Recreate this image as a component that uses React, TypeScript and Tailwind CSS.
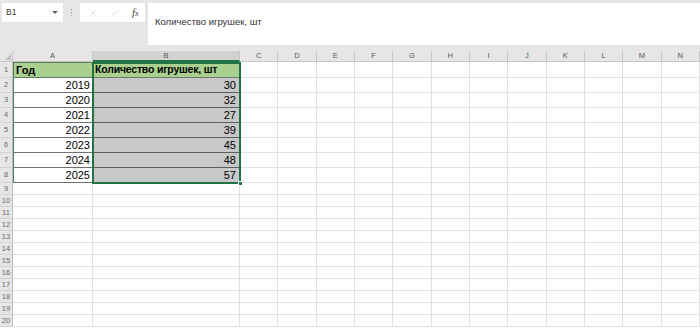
import React from 'react';
import { X, Check } from 'lucide-react';

const cols = ['C', 'D', 'E', 'F', 'G', 'H', 'I', 'J', 'K', 'L', 'M', 'N'];

const data: [string, string][] = [
  ['2019', '30'],
  ['2020', '32'],
  ['2021', '27'],
  ['2022', '39'],
  ['2023', '45'],
  ['2024', '48'],
  ['2025', '57'],
];

const rowHeights = [16, 15, 15, 15, 15, 15, 15, 15, 12, 12, 12, 12, 12, 12, 12, 12, 12, 12, 12, 12];

function FormulaBar() {
  return (
    <div className="flex h-[51px] items-start bg-[#e6e6e6] pt-[3px]">
      {/* Name box */}
      <div className="ml-[2px] flex h-[19px] w-[61px] items-center justify-between bg-white pl-[4px] pr-[5px]">
        <span className="text-[8.5px] text-[#333]">B1</span>
        <span className="h-0 w-0 border-x-[3px] border-t-[3px] border-x-transparent border-t-[#666]" />
      </div>
      <div className="flex h-[19px] w-[17px] flex-col items-center justify-center gap-[2px]">
        <span className="h-[1px] w-[1px] bg-[#999]" />
        <span className="h-[1px] w-[1px] bg-[#999]" />
        <span className="h-[1px] w-[1px] bg-[#999]" />
      </div>
      {/* cancel / enter / fx */}
      <div className="flex h-[19px] w-[65px] items-center gap-[12px] bg-white pl-[8px]">
        <X size={10} strokeWidth={1.2} className="text-[#bdbdbd]" />
        <Check size={10} strokeWidth={1.2} className="text-[#bdbdbd]" />
        <span className="font-['Liberation_Serif',serif] text-[11px] italic leading-none text-[#444]">
          f<span className="text-[8px]">x</span>
        </span>
      </div>
      {/* formula input */}
      <div className="ml-[3px] h-[42px] flex-1 bg-white pl-[7px] pt-[5px]">
        <span className="text-[9.5px] text-[#333]">Количество игрушек, шт</span>
      </div>
    </div>
  );
}

export default function App() {
  return (
    <div className="h-[329px] w-[700px] overflow-hidden bg-white font-['Liberation_Sans',Arial,sans-serif]">
      <FormulaBar />
      <div className="relative">
        <div
          className="grid grid-cols-[13px_80px_147px_repeat(12,1fr)]"
          style={{ gridTemplateRows: `11px ${rowHeights.map((h) => h + 'px').join(' ')}` }}
        >
          {/* header row */}
          <div className="flex items-end justify-end border-b border-r border-[#c6c6c6] bg-[#e6e6e6] pb-[1px] pr-[1px]">
            <svg width="6" height="6" viewBox="0 0 6 6">
              <path d="M6 0 L6 6 L0 6 Z" fill="#bfbfbf" />
            </svg>
          </div>
          <div className="flex items-center justify-center border-b border-r border-[#c6c6c6] bg-[#e6e6e6] text-[7.5px] text-[#555]">A</div>
          <div className="flex items-center justify-center border-b-2 border-r border-b-[#217346] border-r-[#c6c6c6] bg-[#d2d2d2] text-[7.5px] text-[#555]">B</div>
          {cols.map((c) => (
            <div key={c} className="flex items-center justify-center border-b border-r border-[#c6c6c6] bg-[#e6e6e6] text-[7.5px] text-[#555]">
              {c}
            </div>
          ))}

          {rowHeights.map((_, i) => {
            const r = i + 1;
            return (
              <React.Fragment key={r}>
                <div className="flex items-center justify-center border-b border-r border-b-[#d4d4d4] border-r-[#bdbdbd] bg-[#e6e6e6] text-[7.5px] text-[#666]">
                  {r}
                </div>
                {r === 1 ? (
                  <>
                    <div className="flex items-center border border-[#5d7a64] bg-[#a9d08e] pl-[2px] text-[11px] font-bold text-black">Год</div>
                    <div className="flex items-center border-y border-r border-[#6f7a6f] bg-[#a9d08e] pl-[2px] text-[10.5px] font-bold tracking-[-0.2px] text-black">
                      Количество игрушек, шт
                    </div>
                  </>
                ) : r <= 8 ? (
                  <>
                    <div className="flex items-center justify-end border-b border-r border-b-[#6f6f6f] border-r-[#6f6f6f] border-l border-l-[#4f7d5c] bg-white pr-[2px] text-[11px] text-black">
                      {data[r - 2][0]}
                    </div>
                    <div className="flex items-center justify-end border-b border-r border-[#5f5f5f] bg-[#c8c8c8] pr-[3px] text-[11px] text-black">
                      {data[r - 2][1]}
                    </div>
                  </>
                ) : (
                  <>
                    <div className="border-b border-r border-[#e1e1e1]" />
                    <div className="border-b border-r border-[#e1e1e1]" />
                  </>
                )}
                {cols.map((c) => (
                  <div key={c} className="border-b border-r border-[#e1e1e1]" />
                ))}
              </React.Fragment>
            );
          })}
        </div>
        {/* selection outline B1:B8 */}
        <div className="pointer-events-none absolute left-[92px] top-[11px] h-[122px] w-[149px] border-2 border-[#217346]" />
        <div className="absolute left-[238px] top-[130px] h-[5px] w-[5px] border border-white bg-[#217346]" />
      </div>
    </div>
  );
}
